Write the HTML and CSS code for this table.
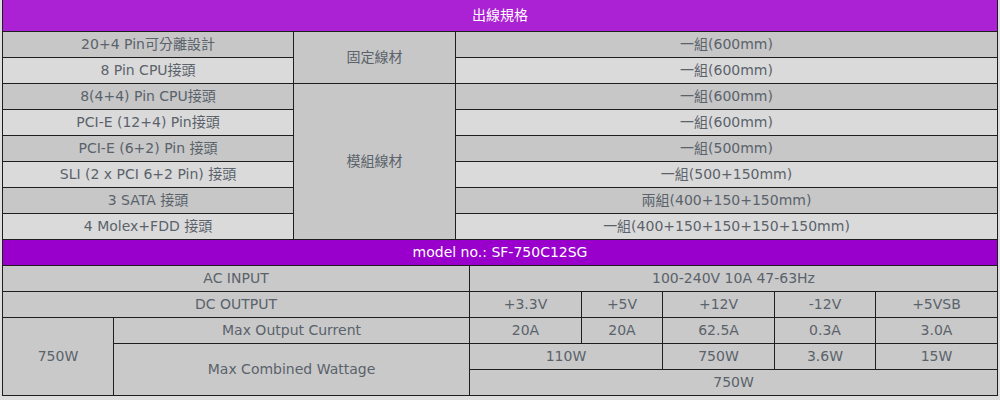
FILE: index.html
```html
<!DOCTYPE html>
<html lang="zh-Hant">
<head>
<meta charset="utf-8">
<title>出線規格</title>
<link rel="stylesheet" href="styles.css">
</head>
<body>
<div class="wrap">
  <table class="spec cables">
    <colgroup>
      <col class="c-a"><col class="c-b"><col class="c-c">
    </colgroup>
    <tr class="head"><th colspan="3">出線規格</th></tr>
    <tr class="dark"><td>20+4 Pin可分離設計</td><td rowspan="2" class="group">固定線材</td><td>一組(600mm)</td></tr>
    <tr class="light"><td>8 Pin CPU接頭</td><td>一組(600mm)</td></tr>
    <tr class="dark"><td>8(4+4) Pin CPU接頭</td><td rowspan="6" class="group">模組線材</td><td>一組(600mm)</td></tr>
    <tr class="light"><td>PCI-E (12+4) Pin接頭</td><td>一組(600mm)</td></tr>
    <tr class="dark"><td>PCI-E (6+2) Pin 接頭</td><td>一組(500mm)</td></tr>
    <tr class="light"><td>SLI (2 x PCI 6+2 Pin) 接頭</td><td>一組(500+150mm)</td></tr>
    <tr class="dark"><td>3 SATA 接頭</td><td>兩組(400+150+150mm)</td></tr>
    <tr class="light"><td>4 Molex+FDD 接頭</td><td>一組(400+150+150+150+150mm)</td></tr>
  </table>
  <table class="spec power">
    <colgroup>
      <col class="p-a"><col class="p-b"><col class="p-c"><col class="p-d"><col class="p-e"><col class="p-f"><col class="p-g">
    </colgroup>
    <tr class="head2"><th colspan="7">model no.: SF-750C12SG</th></tr>
    <tr><td colspan="2">AC INPUT</td><td colspan="5">100-240V 10A 47-63Hz</td></tr>
    <tr><td colspan="2">DC OUTPUT</td><td class="sep">+3.3V</td><td>+5V</td><td class="sep">+12V</td><td>-12V</td><td>+5VSB</td></tr>
    <tr><td rowspan="4" class="watt">750W</td><td>Max Output Current</td><td class="sep">20A</td><td>20A</td><td class="sep">62.5A</td><td>0.3A</td><td>3.0A</td></tr>
    <tr><td rowspan="3" class="combined">Max Combined Wattage</td><td colspan="2" class="sep">110W</td><td class="sep">750W</td><td>3.6W</td><td>15W</td></tr>
    <tr><td colspan="5" class="sep total">750W</td></tr>
  </table>
</div>
</body>
</html>
```

FILE: styles.css
```css
html, body {
  margin: 0;
  padding: 0;
  background: #dedede;
}

.wrap {
  padding-left: 2px;
  width: 995px;
}

.spec {
  border-collapse: collapse;
  table-layout: fixed;
  width: 995px;
  font-family: "DejaVu Sans", Verdana, "Noto Sans CJK TC", sans-serif;
  font-size: 14px;
  color: #5a626b;
}

.spec td, .spec th {
  border: 1px solid #1e1e1e;
  padding: 0;
  text-align: center;
  vertical-align: middle;
  height: 25px;
  line-height: 17px;
  font-weight: normal;
  white-space: nowrap;
}

.c-a { width: 291px; }
.c-b { width: 162px; }
.c-c { width: 542px; }

.head th {
  background: #ab21d4;
  color: #ffffff;
  height: 31px;
  border-top: none;
  font-family: "DejaVu Sans", "Noto Sans CJK TC", sans-serif;
  padding-top: 0;
}

.dark td { background: #c7c7c7; }
.light td { background: #dadada; }
.spec td.group { background: #c7c7c7; border-color: #1e1e1e; }

.p-a { width: 111px; }
.p-b { width: 356px; }
.p-c { width: 112px; }
.p-d { width: 81px; }
.p-e { width: 112px; }
.p-f { width: 101px; }
.p-g { width: 122px; }

.power td { background: #c9c9c9; }

.head2 th {
  background: #9900cc;
  color: #ffffff;
  height: 25px;
  border-top: none;
}

.spec td.combined { vertical-align: middle; }
```
